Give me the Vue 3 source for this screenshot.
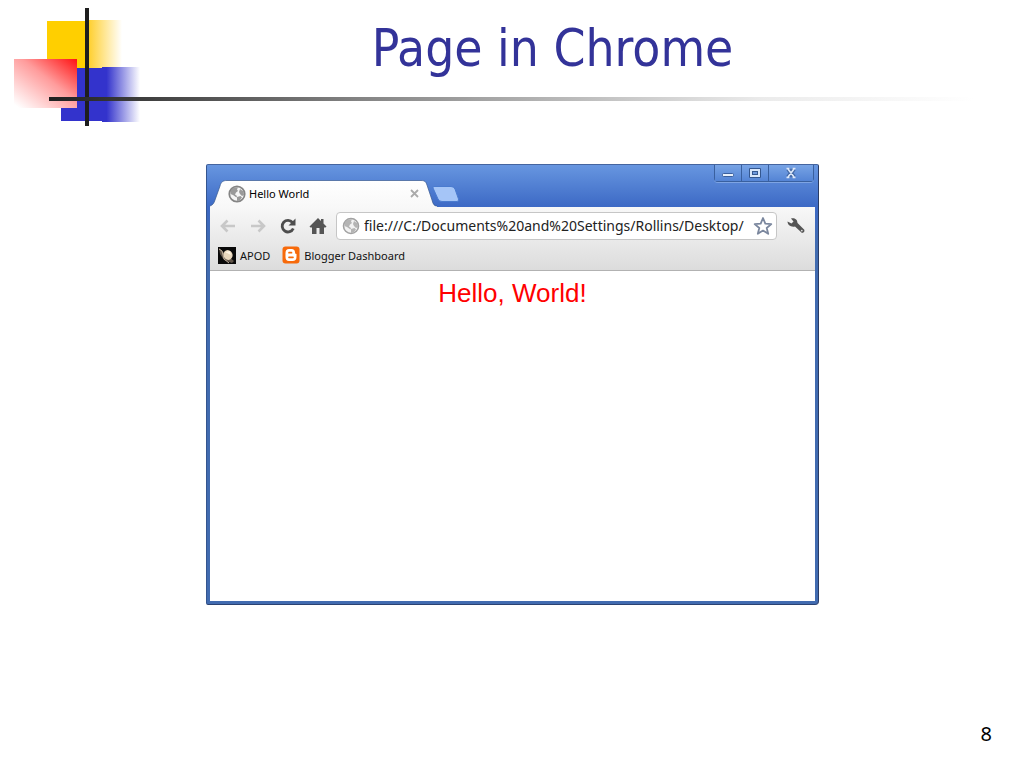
<script setup>
import { ref } from 'vue'

const address = ref('file:///C:/Documents%20and%20Settings/Rollins/Desktop/')
</script>

<template>
  <main class="slide">
    <header class="slide-header">
      <svg class="motif" width="160" height="130" viewBox="0 0 160 130" aria-hidden="true">
        <defs>
          <linearGradient id="yellow-fade">
            <stop offset="0" stop-color="#ffcf00" />
            <stop offset="0.1" stop-color="#ffd23a" />
            <stop offset="1" stop-color="#ffffff" />
          </linearGradient>
          <linearGradient id="blue-fade">
            <stop offset="0" stop-color="#3333cc" />
            <stop offset="0.12" stop-color="#3333cc" />
            <stop offset="1" stop-color="#ffffff" />
          </linearGradient>
          <linearGradient id="red-fade" gradientUnits="userSpaceOnUse" x1="77" y1="59" x2="32" y2="118">
            <stop offset="0" stop-color="#ff1212" />
            <stop offset="0.45" stop-color="#ff9c9c" />
            <stop offset="1" stop-color="#ffffff" />
          </linearGradient>
        </defs>
        <rect x="47" y="21" width="42" height="47" fill="#ffcf00" />
        <rect x="87" y="20" width="35" height="48" fill="url(#yellow-fade)" />
        <rect x="61" y="68" width="42" height="53" fill="#3333cc" />
        <rect x="102" y="67" width="38" height="55" fill="url(#blue-fade)" />
        <rect x="14" y="59" width="63" height="49" fill="url(#red-fade)" />
        <rect x="85" y="8" width="4" height="118" fill="#1e1e1e" />
      </svg>
      <div class="rule"></div>
      <h1>Page in Chrome</h1>
    </header>

    <section class="window" aria-label="Browser window">
      <div class="titlebar">
        <div class="tab">
          <svg class="tab-shape" width="228" height="27" viewBox="0 0 228 27" aria-hidden="true">
            <defs>
              <linearGradient id="tab-fill" x2="0" y2="1">
                <stop offset="0" stop-color="#ffffff" />
                <stop offset="1" stop-color="#f8f8f8" />
              </linearGradient>
            </defs>
            <path d="M0 27V26C3 25 4 23 5 20L10 6C11 2 13 0.5 17 0.5H211C215 0.5 216 2 217 5L222 20C223 24 224 26 227 26V27Z" fill="url(#tab-fill)" />
            <path d="M0 26C3 25 4 23 5 20L10 6C11 2 13 0.5 17 0.5H211C215 0.5 216 2 217 5L222 20C223 24 224 26 227 26" fill="none" stroke="#38588f" stroke-opacity="0.7" />
          </svg>
          <svg class="icon" width="18" height="18" viewBox="0 0 18 18" aria-hidden="true">
            <circle cx="9" cy="9" r="7.7" fill="#f5f5f5" stroke="#858585" stroke-width="1.8" />
            <path d="M3 5L6 2.5L10 2.3L9 4.5L10 6L8 7.5L7 9.5L9 11L8.5 12.5L5 10L2.5 9Z M12 4L15.5 6.5L16 10L14 11L12 9L11 7Z M9 12L12.5 11L14 12.5L11.5 15.5L9 16Z" fill="#9a9a9a" />
          </svg>
          <span class="tab-title">Hello World</span>
          <button class="bare" type="button" aria-label="Close tab">
            <svg width="9" height="9" viewBox="0 0 9 9"><path d="M1 1L8 8M8 1L1 8" stroke="#aaa" stroke-width="1.8" /></svg>
          </button>
        </div>
        <button class="bare new-tab" type="button" aria-label="New tab">
          <svg width="28" height="16" viewBox="0 0 28 16"><path d="M2 0.5H19Q22 0.5 23 3L26.500 13Q27 15.500 25 15.500H10Q7 15.500 6 13L1 2Q0.500 0.500 2 0.500Z" fill="#a5c5f7" stroke="#4a7bcf" /></svg>
        </button>
        <div class="controls">
          <button type="button" class="control" aria-label="Minimize">
            <svg width="14" height="12" viewBox="0 0 14 12"><rect x="1.500" y="6.500" width="11" height="3" rx="1" fill="#e8f0fb" stroke="#3a5f9d" /></svg>
          </button>
          <button type="button" class="control" aria-label="Maximize">
            <svg width="14" height="12" viewBox="0 0 14 12"><path d="M1.500 1.500H12.500V10.500H1.500Z" fill="#d8e6fa" stroke="#34578f" /><rect x="4.500" y="4.500" width="5" height="3" fill="#6d98dc" stroke="#34578f" /></svg>
          </button>
          <button type="button" class="control close" aria-label="Close">
            <svg width="14" height="12" viewBox="0 0 14 12"><path d="M4 2L10 10M10 2L4 10" stroke="#34578f" stroke-width="4" stroke-opacity="0.7" /><path d="M4 2L10 10M10 2L4 10M2.500 1.500H5.500M8.500 1.500H11.500M2.500 10.500H5.500M8.500 10.500H11.500" stroke="#dce8fa" stroke-width="1.600" /></svg>
          </button>
        </div>
      </div>

      <div class="chrome">
        <div class="toolbar">
          <button class="bare" type="button" aria-label="Back">
            <svg width="18" height="18" viewBox="0 0 18 18"><path d="M16 9H3M8.500 3.500L3 9L8.500 14.500" fill="none" stroke="#c8c8c8" stroke-width="2.600" /></svg>
          </button>
          <button class="bare" type="button" aria-label="Forward">
            <svg width="18" height="18" viewBox="0 0 18 18"><path d="M2 9H15M9.500 3.500L15 9L9.500 14.500" fill="none" stroke="#c8c8c8" stroke-width="2.600" /></svg>
          </button>
          <button class="bare" type="button" aria-label="Reload">
            <svg width="18" height="18" viewBox="0 0 18 18"><path d="M13.500 5.500A5.800 5.800 0 1 0 14.300 11.500" fill="none" stroke="#4d4d4d" stroke-width="2.800" /><path d="M16.500 1.500V8.500H9.500Z" fill="#4d4d4d" /></svg>
          </button>
          <button class="bare" type="button" aria-label="Home">
            <svg width="18" height="18" viewBox="0 0 18 18"><path d="M9 1L12 4V2H14.500V6.500L17.500 9.500L16.500 10.500H15V17H10.500V11H7.500V17H3V10.500H1.500L0.500 9.500Z" fill="#555" /></svg>
          </button>
          <div class="omnibox">
            <svg class="icon" width="18" height="18" viewBox="0 0 18 18" aria-hidden="true">
              <circle cx="9" cy="9" r="7.500" fill="#f2f2f2" stroke="#a2a2a2" stroke-width="1.600" />
              <path d="M3 5L6 2.500L10 2.300L9 4.500L10 6L8 7.500L7 9.500L9 11L8.500 12.500L5 10L2.500 9Z M12 4L15.500 6.500L16 10L14 11L12 9L11 7Z M9 12L12.500 11L14 12.500L11.500 15.500L9 16Z" fill="#b4b4b4" />
            </svg>
            <input v-model="address" class="address" type="text" aria-label="Address" spellcheck="false" />
            <button class="bare" type="button" aria-label="Bookmark this page">
              <svg width="20" height="20" viewBox="0 0 20 20"><path d="M10 2L12.300 7.700L18.300 8.100L13.700 12L15.200 17.800L10 14.600L4.800 17.800L6.300 12L1.700 8.100L7.700 7.700Z" fill="#fff" stroke="#7b879e" stroke-width="1.800" stroke-linejoin="round" /></svg>
            </button>
          </div>
          <button class="bare wrench" type="button" aria-label="Settings">
            <svg width="20" height="18" viewBox="0 0 20 18"><path d="M5 1.500C8 0.500 11.500 2 11.500 6L18.300 12.800Q19 15.500 16 16L9 9.500C5 10.500 1.500 8 1.500 4.500L5.500 6.500L7.500 4.500Z" fill="#555" /><circle cx="15.800" cy="13.600" r="0.900" fill="#ddd" /></svg>
          </button>
        </div>

        <nav class="bookmarks" aria-label="Bookmarks">
          <a href="#apod">
            <svg width="18" height="17" viewBox="0 0 18 17" aria-hidden="true"><rect width="18" height="17" fill="#090909" /><path d="M1 1L5 5L16 14L14 16L6 13L2 7Z" fill="#877665" opacity="0.700" /><ellipse cx="10" cy="8" rx="4.500" ry="5" transform="rotate(-25 10 8)" fill="#e9d7bc" /><path d="M7 5L12 4L13 8Z" fill="#fff4e2" /><path d="M1 2L4 4L6 12L11 16" fill="none" stroke="#c3b39f" /></svg>
            <span>APOD</span>
          </a>
          <a href="#blogger">
            <svg width="18" height="18" viewBox="0 0 18 18" aria-hidden="true"><rect x="0.500" y="0.500" width="17" height="17" rx="3" fill="#f76a0b" /><path d="M7 3H9.500Q13 3 13 6.500Q13 8 14.500 8V11Q14.500 15 10.500 15H7Q3.500 15 3.500 11V7Q3.500 3 7 3Z" fill="#fff" /><path d="M7 6.700H9.500M7 11.300H11" stroke="#f76a0b" stroke-width="1.700" stroke-linecap="round" /></svg>
            <span>Blogger Dashboard</span>
          </a>
        </nav>
      </div>

      <article class="page">
        <p>Hello, World!</p>
      </article>
    </section>

    <footer>8</footer>
  </main>
</template>

<style>
body {
  margin: 0;
  background: #fff;
}
</style>

<style scoped>
.slide {
  box-sizing: border-box;
  min-height: 100vh;
  display: flex;
  flex-direction: column;
  font-family: "Noto Sans", sans-serif;
  color: #000;
}

.slide-header {
  position: relative;
  height: 164px;
}

.motif {
  position: absolute;
  top: 0;
  left: 0;
}

.rule {
  position: absolute;
  top: 97px;
  left: 49px;
  right: 50px;
  height: 4px;
  background: linear-gradient(90deg, #202020, #858585 34%, #ebebeb 77%, #fff);
}

h1 {
  position: relative;
  margin: 0;
  padding: 14px 0 0 81px;
  font-family: "DejaVu Sans Condensed", "Noto Sans", sans-serif;
  font-size: 51px;
  line-height: 70px;
  font-weight: 400;
  text-align: center;
  color: #333399;
}

button {
  font: inherit;
  cursor: pointer;
}

.bare {
  display: flex;
  padding: 0;
  border: 0;
  background: none;
}

.window {
  margin: 0 205px 0 206px;
  box-sizing: border-box;
  border: 1px solid #34558f;
  border-right-color: #2a3c66;
  border-bottom-color: #2b4272;
  border-top-color: #45659f;
  border-radius: 2px 2px 4px 2px;
  padding: 0 3px 3px;
  background: linear-gradient(#6796e0, #3c69c5 42px, #416bb0 80px);
}

.titlebar {
  display: flex;
  align-items: flex-end;
  height: 42px;
}

.tab {
  position: relative;
  box-sizing: border-box;
  display: flex;
  align-items: center;
  width: 223px;
  height: 27px;
  padding: 0 14px 0 18px;
}

.tab-shape {
  position: absolute;
  left: 0;
  top: 0;
}

.tab > .icon,
.tab-title,
.tab > .bare {
  position: relative;
}

.tab-title {
  flex: 1;
  margin-left: 3px;
  font-size: 11px;
}

.new-tab {
  margin: 0 0 5px -1px;
}

.controls {
  display: flex;
  align-self: flex-start;
  margin: 0 1px 0 auto;
  border: 1px solid #39609f;
  border-top: 0;
  border-radius: 0 0 4px 4px;
  box-shadow: 0 1px 0 #7ea4e3;
}

.control {
  display: flex;
  align-items: center;
  justify-content: center;
  width: 27px;
  height: 16px;
  padding: 0;
  border: 0;
  border-right: 1px solid #39609f;
  background: linear-gradient(#78a4e5, #5484d5);
}

.close {
  width: 44px;
  border-right: 0;
}

.chrome {
  background: linear-gradient(#f8f8f8, #dcdcdc);
  border-bottom: 1px solid #b2b2b2;
}

.toolbar {
  display: flex;
  align-items: center;
  gap: 12px;
  height: 37px;
  padding: 0 9px;
}

.omnibox {
  flex: 1;
  min-width: 0;
  box-sizing: border-box;
  display: flex;
  align-items: center;
  height: 28px;
  margin-left: -3px;
  padding: 0 3px 0 5px;
  border: 1px solid #c6c6c6;
  border-radius: 4px;
  background: #fff;
}

.address {
  flex: 1;
  min-width: 0;
  margin: 0 0 0 4px;
  padding: 0;
  border: 0;
  outline: 0;
  background: none;
  font-family: inherit;
  font-size: 14px;
  color: #222;
}

.wrench {
  margin-left: -3px;
}

.bookmarks {
  display: flex;
  align-items: center;
  gap: 12px;
  box-sizing: border-box;
  height: 26px;
  padding: 0 7px 4px 8px;
  font-size: 11px;
}

.bookmarks a {
  display: flex;
  align-items: center;
  gap: 4px;
  color: #111;
  text-decoration: none;
}

.page {
  min-height: 330px;
  background: #fff;
  font-family: "Liberation Sans", Arial, sans-serif;
}

.page p {
  margin: 0;
  padding-top: 7px;
  font-size: 26px;
  line-height: 30px;
  text-align: center;
  color: #f00;
}

footer {
  margin-top: auto;
  padding: 0 32px 20px 0;
  font-size: 20px;
  line-height: 28px;
  text-align: right;
}
</style>
